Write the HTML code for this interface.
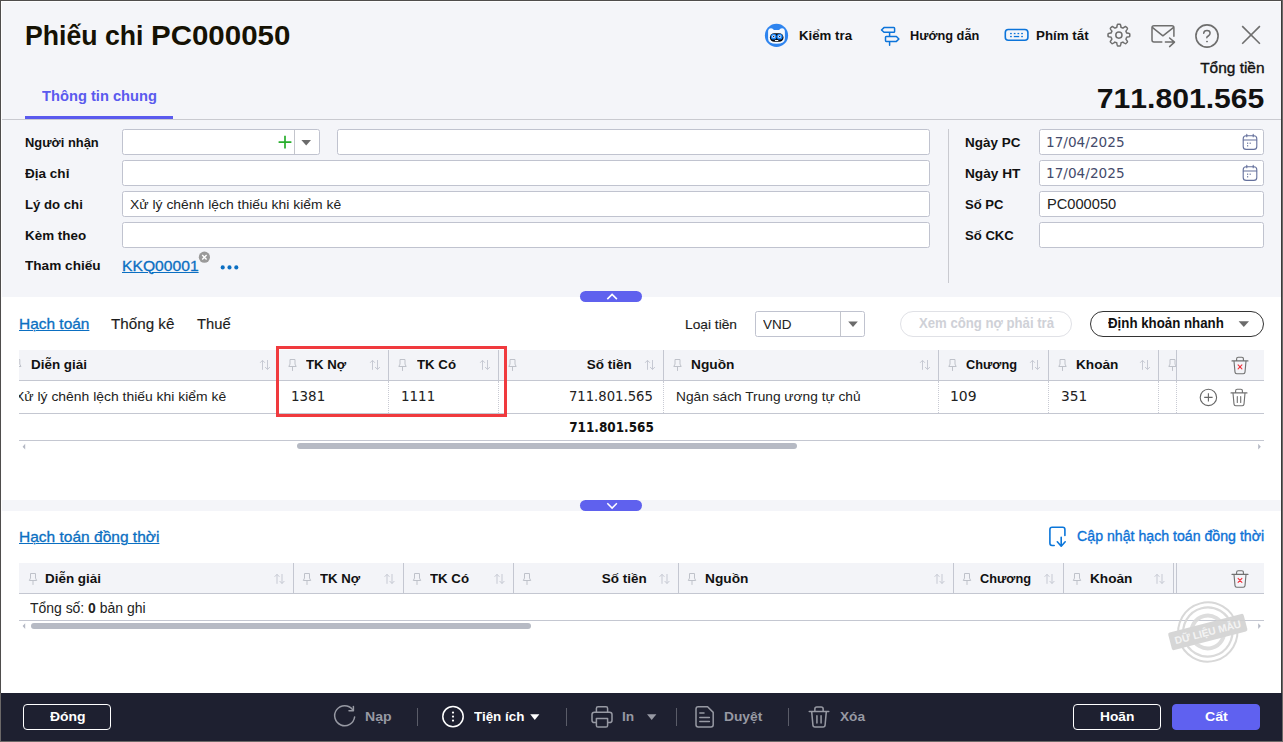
<!DOCTYPE html>
    <html lang="vi">
    <head>
    <meta charset="utf-8">
    <title>Phiếu chi PC000050</title>
    <style>
    *{box-sizing:border-box;margin:0;padding:0}
    html,body{width:1283px;height:742px;overflow:hidden}
    body{position:relative;background:#f4f5f9;font-family:"Liberation Sans",sans-serif;color:#1a1a1a;font-size:14px}
    .abs{position:absolute}
    .t{position:absolute;white-space:nowrap;line-height:1}
    .b{font-weight:bold}
.md{-webkit-text-stroke:.35px currentColor}
.md2{-webkit-text-stroke:.15px currentColor}
    #fr-t{left:0;top:0;width:1283px;height:1px;background:#4f4d4c}
    #fr-l{left:0;top:0;width:1px;height:742px;background:linear-gradient(#4f4d4c 0,#4f4d4c 693px,#6b6868 693px)}
    #fr-t2{left:1px;top:1px;width:1281px;height:1px;background:#fdfdfe}
    #fr-l2{left:1px;top:1px;width:1px;height:692px;background:#fdfdfe}
    #fr-r{left:1282px;top:0;width:1px;height:742px;background:#6b6868}
    #fr-r2{left:1281px;top:1px;width:1px;height:692px;background:#3c3b3b}
    #fr-b{left:0;top:741px;width:1283px;height:1px;background:#6b6868}
    .tb{color:#111;font-weight:bold}
    #tab-u{left:25px;top:116px;width:148px;height:3px;background:#5a5aee}
    #hline{left:2px;top:119px;width:1279px;height:1px;background:#c9cad0}
    .lb{font-weight:bold;color:#111}
    .in{position:absolute;height:26px;background:#fff;border:1px solid #c0c3cf;border-radius:2.5px}
    .v{color:#222}
    #vsep{left:948px;top:129px;width:1px;height:154px;background:#c9cad0}
    #sec1{left:2px;top:297px;width:1279px;height:203px;background:#fff}
    #sec2{left:2px;top:511px;width:1279px;height:182px;background:#fff}
    .handle{position:absolute;left:580px;width:62px;height:11px;background:#5f61ee;border-radius:5.5px}
    .lnk{color:#0b6fc2;text-decoration:underline;text-underline-offset:1px;text-decoration-thickness:1px;-webkit-text-stroke:.3px currentColor}
    .gh{position:absolute;left:19px;width:1245px;height:30px;background:#f3f4f8}
    .ht{font-weight:bold;color:#111}
    .cs{position:absolute;width:1px;background:#c4c7d1}
    .ds{position:absolute;width:0;border-left:1px dotted #c9cbd4}
    .hl{position:absolute;left:19px;width:1245px;height:1px;background:#c4c7d1}
    .cell{color:#222}
    .pill{position:absolute;top:311px;height:26px;border-radius:13px;background:#fff}
    #ft{left:1px;top:693px;width:1281px;height:48px;background:#1e2030}
    .fb{position:absolute;top:704px;height:26px;border:1px solid #fff;border-radius:4px}
    .fw{color:#fff;font-weight:bold}
    .fg{color:#9799a3;font-weight:bold}
    .fs{position:absolute;top:708px;width:1px;height:18px;background:#5a5c68}
    .sb{position:absolute;height:6px;border-radius:3px;background:#b6bac4}
    svg{position:absolute;left:0;top:0;overflow:visible;pointer-events:none}
    </style>
    </head>
    <body>
    <div class="t" id="t0" style="left:25px;top:22px;font-size:28.00px;transform:scaleX(0.9512);transform-origin:left center;font-weight:bold;color:#161204">Phiếu chi</div>
<div class="t" id="t1" style="left:151.2px;top:22px;font-size:28.00px;transform:scaleX(1.0533);transform-origin:left center;font-weight:bold;color:#161204">PC000050</div>
<div class="t tb" id="t2" style="left:799.4px;top:29px;font-size:13.60px;transform:scaleX(0.9742);transform-origin:left center;">Kiểm tra</div>
<div class="t tb" id="t3" style="left:909.9px;top:29px;font-size:13.60px;transform:scaleX(0.9379);transform-origin:left center;">Hướng dẫn</div>
<div class="t tb" id="t4" style="left:1036.1px;top:29px;font-size:13.60px;transform:scaleX(0.9809);transform-origin:left center;">Phím tắt</div>
<div class="t md" id="t5" style="right:18.59999999999991px;top:60px;font-size:15.00px;transform:scaleX(1.0296);transform-origin:right center;color:#111">Tổng tiền</div>
<div class="t b" id="t6" style="right:18.799999999999955px;top:85px;font-size:27.40px;transform:scaleX(1.1003);transform-origin:right center;color:#111;font-kerning:none">711.801.565</div>
<div class="t b" id="t7" style="left:42px;top:89px;font-size:14.80px;transform:scaleX(0.9923);transform-origin:left center;color:#5a5aee">Thông tin chung</div>
<div class="abs" id="tab-u"></div>
<div class="abs" id="hline"></div>
<div class="t lb" id="t8" style="left:25.2px;top:136px;font-size:13.20px;transform:scaleX(0.9782);transform-origin:left center;">Người nhận</div>
<div class="t lb" id="t9" style="left:25.2px;top:167px;font-size:13.20px;transform:scaleX(1.0266);transform-origin:left center;">Địa chỉ</div>
<div class="t lb" id="t10" style="left:25.2px;top:198px;font-size:13.20px;transform:scaleX(0.9984);transform-origin:left center;">Lý do chi</div>
<div class="t lb" id="t11" style="left:25.2px;top:229px;font-size:13.20px;transform:scaleX(1.0167);transform-origin:left center;">Kèm theo</div>
<div class="t lb" id="t12" style="left:25.2px;top:259px;font-size:13.20px;transform:scaleX(1.0316);transform-origin:left center;">Tham chiếu</div>
<div class="in" style="left:122px;top:129px;width:198px"></div>
<div class="abs" style="left:294px;top:130px;width:1px;height:24px;background:#c3c5cc"></div>
<div class="in" style="left:337px;top:129px;width:593px"></div>
<div class="in" style="left:122px;top:160px;width:808px"></div>
<div class="in" style="left:122px;top:191px;width:808px"></div>
<div class="in" style="left:122px;top:222px;width:808px"></div>
<div class="t v" id="t13" style="left:129.5px;top:198px;font-size:13.60px;transform:scaleX(1.0237);transform-origin:left center;">Xử lý chênh lệch thiếu khi kiểm kê</div>
<div class="t lnk" id="t14" style="left:121.8px;top:259px;font-size:14.40px;transform:scaleX(1.0877);transform-origin:left center;">KKQ00001</div>
<div class="abs" id="vsep"></div>
<div class="t lb" id="t15" style="left:965.2px;top:136px;font-size:13.20px;transform:scaleX(1.0215);transform-origin:left center;">Ngày PC</div>
<div class="in" style="left:1039px;top:129px;width:225px"></div>
<div class="t lb" id="t16" style="left:965.2px;top:167px;font-size:13.20px;transform:scaleX(1.0355);transform-origin:left center;">Ngày HT</div>
<div class="in" style="left:1039px;top:160px;width:225px"></div>
<div class="t lb" id="t17" style="left:965.2px;top:198px;font-size:13.20px;transform:scaleX(0.9886);transform-origin:left center;">Số PC</div>
<div class="in" style="left:1039px;top:191px;width:225px"></div>
<div class="t lb" id="t18" style="left:965.2px;top:229px;font-size:13.20px;transform:scaleX(0.9940);transform-origin:left center;">Số CKC</div>
<div class="in" style="left:1039px;top:222px;width:225px"></div>
<div class="t v" id="t19" style="left:1046.2px;top:136px;font-size:13.50px;font-family:'DejaVu Sans','Liberation Sans',sans-serif;transform:scaleX(1.0101);transform-origin:left center;color:#444b6b">17/04/2025</div>
<div class="t v" id="t20" style="left:1046.2px;top:167px;font-size:13.50px;font-family:'DejaVu Sans','Liberation Sans',sans-serif;transform:scaleX(1.0101);transform-origin:left center;color:#444b6b">17/04/2025</div>
<div class="t v" id="t21" style="left:1046.6px;top:198px;font-size:13.80px;transform:scaleX(1.0610);transform-origin:left center;">PC000050</div>
<div class="abs" id="sec1"></div>
<div class="abs" id="sec2"></div>
<div class="handle" style="top:291px"></div>
<div class="handle" style="top:500px"></div>
<div class="t lnk" id="t22" style="left:18.6px;top:317px;font-size:14.40px;transform:scaleX(1.0730);transform-origin:left center;">Hạch toán</div>
<div class="t md2" id="t23" style="left:111.2px;top:317px;font-size:14.40px;transform:scaleX(1.0564);transform-origin:left center;color:#1c1c1c">Thống kê</div>
<div class="t md2" id="t24" style="left:197.2px;top:317px;font-size:14.40px;transform:scaleX(1.0240);transform-origin:left center;color:#1c1c1c">Thuế</div>
<div class="t md2" id="t25" style="left:684.6px;top:318px;font-size:13.60px;transform:scaleX(1.0116);transform-origin:left center;color:#1c1c1c">Loại tiền</div>
<div class="in" style="left:755px;top:311px;width:110px"></div>
<div class="abs" style="left:840px;top:312px;width:1px;height:24px;background:#c3c5cc"></div>
<div class="t v" id="t26" style="left:762.6px;top:318px;font-size:13.60px;transform:scaleX(0.9929);transform-origin:left center;">VND</div>
<div class="pill" style="left:900px;width:172px;border:1px solid #e0e1e6"></div>
<div class="t b" id="t27" style="left:918.8px;top:317px;font-size:13.80px;transform:scaleX(0.9529);transform-origin:left center;color:#cfd1d7">Xem công nợ phải trả</div>
<div class="pill" style="left:1090px;width:174px;border:1px solid #333"></div>
<div class="t b" id="t28" style="left:1108px;top:317px;font-size:13.80px;transform:scaleX(0.9622);transform-origin:left center;color:#111">Định khoản nhanh</div>
<div class="gh" style="top:350px"></div>
<div class="hl" style="top:380px"></div>
<div class="hl" style="top:413px"></div>
<div class="hl" style="top:440px"></div>
<div class="cs" style="left:278px;top:350px;height:30px"></div>
<div class="ds" style="left:278px;top:381px;height:32px"></div>
<div class="cs" style="left:388px;top:350px;height:30px"></div>
<div class="ds" style="left:388px;top:381px;height:32px"></div>
<div class="cs" style="left:498px;top:350px;height:30px"></div>
<div class="ds" style="left:498px;top:381px;height:32px"></div>
<div class="cs" style="left:663px;top:350px;height:30px"></div>
<div class="ds" style="left:663px;top:381px;height:32px"></div>
<div class="cs" style="left:938px;top:350px;height:30px"></div>
<div class="ds" style="left:938px;top:381px;height:32px"></div>
<div class="cs" style="left:1048px;top:350px;height:30px"></div>
<div class="ds" style="left:1048px;top:381px;height:32px"></div>
<div class="cs" style="left:1158px;top:350px;height:30px"></div>
<div class="ds" style="left:1158px;top:381px;height:32px"></div>
<div class="cs" style="left:1176px;top:350px;height:30px"></div>
<div class="ds" style="left:1176px;top:381px;height:32px"></div>
<div class="t ht" id="t29" style="left:30.8px;top:358px;font-size:13.40px;transform:scaleX(1.0034);transform-origin:left center;">Diễn giải</div>
<div class="t ht" id="t30" style="left:306.3px;top:358px;font-size:13.40px;transform:scaleX(0.9861);transform-origin:left center;">TK Nợ</div>
<div class="t ht" id="t31" style="left:416.5px;top:358px;font-size:13.40px;transform:scaleX(0.9893);transform-origin:left center;">TK Có</div>
<div class="t ht" id="t32" style="right:651.2px;top:358px;font-size:13.40px;transform:scaleX(1.0036);transform-origin:right center;">Số tiền</div>
<div class="t ht" id="t33" style="left:690.6px;top:358px;font-size:13.40px;transform:scaleX(1.0238);transform-origin:left center;">Nguồn</div>
<div class="t ht" id="t34" style="left:965.8px;top:358px;font-size:13.40px;transform:scaleX(0.9544);transform-origin:left center;">Chương</div>
<div class="t ht" id="t35" style="left:1075.7px;top:358px;font-size:13.40px;transform:scaleX(1.0179);transform-origin:left center;">Khoản</div>
<div class="abs" style="left:19px;top:381px;width:250px;height:32px;overflow:hidden"><div class="t cell" id="t36" style="left:-3.6px;top:9px;font-size:13.60px;transform:scaleX(1.0237);transform-origin:left center;">Xử lý chênh lệch thiếu khi kiểm kê</div>
</div>
<div class="t cell" id="t37" style="left:290.8px;top:390px;font-size:13.50px;font-family:'DejaVu Sans','Liberation Sans',sans-serif;transform:scaleX(0.9954);transform-origin:left center;">1381</div>
<div class="t cell" id="t38" style="left:400.8px;top:390px;font-size:13.50px;font-family:'DejaVu Sans','Liberation Sans',sans-serif;transform:scaleX(0.9954);transform-origin:left center;">1111</div>
<div class="t cell" id="t39" style="right:630px;top:390px;font-size:13.50px;font-family:'DejaVu Sans','Liberation Sans',sans-serif;transform:scaleX(0.9780);transform-origin:right center;">711.801.565</div>
<div class="t cell" id="t40" style="left:675.8px;top:390px;font-size:13.60px;transform:scaleX(1.0099);transform-origin:left center;">Ngân sách Trung ương tự chủ</div>
<div class="t cell" id="t41" style="left:950.4px;top:390px;font-size:13.50px;font-family:'DejaVu Sans','Liberation Sans',sans-serif;transform:scaleX(1.0318);transform-origin:left center;">109</div>
<div class="t cell" id="t42" style="left:1060.6px;top:390px;font-size:13.50px;font-family:'DejaVu Sans','Liberation Sans',sans-serif;transform:scaleX(1.0162);transform-origin:left center;">351</div>
<div class="t b" id="t43" style="right:628.8px;top:421px;font-size:13.50px;font-family:'DejaVu Sans','Liberation Sans',sans-serif;transform:scaleX(0.8924);transform-origin:right center;color:#111">711.801.565</div>
<div class="sb" style="left:297px;top:443px;width:500px"></div>
<div class="abs" style="left:276px;top:346px;width:231px;height:71px;border:3px solid #f03a3e"></div>
<div class="t lnk" id="t44" style="left:18.6px;top:530px;font-size:14.40px;transform:scaleX(1.0779);transform-origin:left center;">Hạch toán đồng thời</div>
<div class="t md" id="t45" style="right:18.5px;top:529px;font-size:14.00px;transform:scaleX(1.0102);transform-origin:right center;color:#0d72d6">Cập nhật hạch toán đồng thời</div>
<div class="gh" style="top:563px"></div>
<div class="hl" style="top:593px"></div>
<div class="hl" style="top:620px"></div>
<div class="cs" style="left:293px;top:563px;height:30px"></div>
<div class="cs" style="left:403px;top:563px;height:30px"></div>
<div class="cs" style="left:513px;top:563px;height:30px"></div>
<div class="cs" style="left:678px;top:563px;height:30px"></div>
<div class="cs" style="left:953px;top:563px;height:30px"></div>
<div class="cs" style="left:1063px;top:563px;height:30px"></div>
<div class="cs" style="left:1173px;top:563px;height:30px"></div>
<div class="cs" style="left:1176px;top:563px;height:30px"></div>
<div class="t ht" id="t46" style="left:44.8px;top:572px;font-size:13.40px;transform:scaleX(1.0034);transform-origin:left center;">Diễn giải</div>
<div class="t ht" id="t47" style="left:320.4px;top:572px;font-size:13.40px;transform:scaleX(0.9861);transform-origin:left center;">TK Nợ</div>
<div class="t ht" id="t48" style="left:430.4px;top:572px;font-size:13.40px;transform:scaleX(0.9893);transform-origin:left center;">TK Có</div>
<div class="t ht" id="t49" style="right:636.6px;top:572px;font-size:13.40px;transform:scaleX(1.0036);transform-origin:right center;">Số tiền</div>
<div class="t ht" id="t50" style="left:704.8px;top:572px;font-size:13.40px;transform:scaleX(1.0238);transform-origin:left center;">Nguồn</div>
<div class="t ht" id="t51" style="left:980.2px;top:572px;font-size:13.40px;transform:scaleX(0.9544);transform-origin:left center;">Chương</div>
<div class="t ht" id="t52" style="left:1090px;top:572px;font-size:13.40px;transform:scaleX(1.0179);transform-origin:left center;">Khoản</div>
<div class="t" id="t53" style="left:29.8px;top:602px;font-size:13.80px;transform:scaleX(1.0103);transform-origin:left center;color:#222">Tổng số: <b>0</b> bản ghi</div>
<div class="sb" style="left:31px;top:623px;width:500px"></div>
<div class="abs" id="ft"></div>
<div class="fb" style="left:23px;width:88px"></div>
<div class="t fw" id="t54" style="left:49.6px;top:710px;font-size:13.50px;transform:scaleX(1.0319);transform-origin:left center;">Đóng</div>
<div class="t fg" id="t55" style="left:364.8px;top:710px;font-size:13.50px;transform:scaleX(1.0425);transform-origin:left center;">Nạp</div>
<div class="t fw" id="t56" style="left:473.6px;top:710px;font-size:13.50px;transform:scaleX(0.9928);transform-origin:left center;">Tiện ích</div>
<div class="t fg" id="t57" style="left:621.8px;top:710px;font-size:13.50px;transform:scaleX(1.0167);transform-origin:left center;">In</div>
<div class="t fg" id="t58" style="left:724px;top:710px;font-size:13.50px;transform:scaleX(1.0209);transform-origin:left center;">Duyệt</div>
<div class="t fg" id="t59" style="left:839.7px;top:710px;font-size:13.50px;transform:scaleX(1.0095);transform-origin:left center;">Xóa</div>
<div class="fs" style="left:417px"></div>
<div class="fs" style="left:566px"></div>
<div class="fs" style="left:675.5px"></div>
<div class="fs" style="left:787.5px"></div>
<div class="fb" style="left:1073px;width:88px"></div>
<div class="t fw" id="t60" style="left:1099.8px;top:710px;font-size:13.50px;transform:scaleX(1.0193);transform-origin:left center;">Hoãn</div>
<div class="fb" style="left:1172px;width:88px;background:#5f61f0;border-color:#5f61f0"></div>
<div class="t fw" id="t61" style="left:1204.8px;top:710px;font-size:13.50px;transform:scaleX(1.0475);transform-origin:left center;">Cất</div>
<svg width="1283" height="742" viewBox="0 0 1283 742">
<g transform="translate(776.5,35.4)">
    <circle r="11.6" fill="#2e84ef"/>
    <path d="M-8.4,-2.6 Q-8.8,-7.2 -5.4,-7.2 Q-3.6,-7.2 -2.6,-5.4 H2.6 Q3.6,-7.2 5.4,-7.2 Q8.8,-7.2 8.4,-2.6 V3 Q8.4,8.4 0,8.4 Q-8.4,8.4 -8.4,3 Z" fill="#f4f9ff"/>
    <rect x="-6.6" y="-2.2" width="13.6" height="8.6" rx="4.3" fill="#05070c"/>
    <circle cx="-2.8" cy="1.3" r="2.9" fill="#1b86f7"/><circle cx="3.2" cy="1.3" r="2.9" fill="#1b86f7"/>
    <circle cx="-2.9" cy="1.2" r="1.5" fill="#e8f2ff"/><circle cx="3.1" cy="1.2" r="1.5" fill="#e8f2ff"/>
    <circle cx="-2.9" cy="1.2" r=".75" fill="#1c1d45"/><circle cx="3.1" cy="1.2" r=".75" fill="#1c1d45"/>
    <rect x="-1.6" y="4.5" width="3.4" height="1.1" rx=".3" fill="#f4f9ff"/>
    </g>
    <g fill="none" stroke="#0c74da" stroke-width="1.5" stroke-linejoin="round" stroke-linecap="round">
    <path d="M884,27.6 H893.8 Q894.6,27.6 894.6,28.4 V31.5 Q894.6,32.3 893.8,32.3 H884 L881.5,29.95 Z"/>
    <path d="M886.3,36.5 H896.4 L898.9,38.95 L896.4,41.4 H886.3 Q885.5,41.4 885.5,40.6 V37.3 Q885.5,36.5 886.3,36.5 Z"/>
    <path d="M889.6,33 V35.8 M889.6,42.2 V45.2"/>
    </g>
    <rect x="1005.3" y="29.5" width="22.6" height="10.7" rx="3" fill="none" stroke="#0c74da" stroke-width="1.6"/>
    <g fill="#0c74da"><rect x="1010.1" y="32.9" width="1.7" height="1.3"/><rect x="1013.8" y="32.9" width="1.7" height="1.3"/><rect x="1017.5" y="32.9" width="1.7" height="1.3"/><rect x="1021.2" y="32.9" width="1.7" height="1.3"/>
    <rect x="1010.1" y="35.9" width="1.7" height="1.3"/><rect x="1013.8" y="35.9" width="5.4" height="1.3"/><rect x="1021.2" y="35.9" width="1.7" height="1.3"/></g>
    <path d="M1118.90,24.20 L1119.19,24.20 L1119.47,24.21 L1119.76,24.23 L1120.04,24.26 L1120.31,24.37 L1120.51,24.93 L1120.67,25.53 L1120.80,26.14 L1120.91,26.74 L1120.99,27.30 L1121.17,27.43 L1121.37,27.49 L1121.57,27.56 L1121.77,27.63 L1121.96,27.71 L1122.15,27.79 L1122.34,27.88 L1122.53,27.97 L1122.72,28.07 L1122.94,28.11 L1123.39,27.77 L1123.89,27.42 L1124.42,27.07 L1124.95,26.77 L1125.49,26.51 L1125.76,26.63 L1125.98,26.81 L1126.19,27.00 L1126.40,27.19 L1126.61,27.39 L1126.81,27.60 L1127.00,27.81 L1127.19,28.02 L1127.37,28.24 L1127.49,28.51 L1127.23,29.05 L1126.93,29.58 L1126.58,30.11 L1126.23,30.61 L1125.89,31.06 L1125.93,31.28 L1126.03,31.47 L1126.12,31.66 L1126.21,31.85 L1126.29,32.04 L1126.37,32.23 L1126.44,32.43 L1126.51,32.63 L1126.57,32.83 L1126.70,33.01 L1127.26,33.09 L1127.86,33.20 L1128.47,33.33 L1129.07,33.49 L1129.63,33.69 L1129.74,33.96 L1129.77,34.24 L1129.79,34.53 L1129.80,34.81 L1129.80,35.10 L1129.80,35.39 L1129.79,35.67 L1129.77,35.96 L1129.74,36.24 L1129.63,36.51 L1129.07,36.71 L1128.47,36.87 L1127.86,37.00 L1127.26,37.11 L1126.70,37.19 L1126.57,37.37 L1126.51,37.57 L1126.44,37.77 L1126.37,37.97 L1126.29,38.16 L1126.21,38.35 L1126.12,38.54 L1126.03,38.73 L1125.93,38.92 L1125.89,39.14 L1126.23,39.59 L1126.58,40.09 L1126.93,40.62 L1127.23,41.15 L1127.49,41.69 L1127.37,41.96 L1127.19,42.18 L1127.00,42.39 L1126.81,42.60 L1126.61,42.81 L1126.40,43.01 L1126.19,43.20 L1125.98,43.39 L1125.76,43.57 L1125.49,43.69 L1124.95,43.43 L1124.42,43.13 L1123.89,42.78 L1123.39,42.43 L1122.94,42.09 L1122.72,42.13 L1122.53,42.23 L1122.34,42.32 L1122.15,42.41 L1121.96,42.49 L1121.77,42.57 L1121.57,42.64 L1121.37,42.71 L1121.17,42.77 L1120.99,42.90 L1120.91,43.46 L1120.80,44.06 L1120.67,44.67 L1120.51,45.27 L1120.31,45.83 L1120.04,45.94 L1119.76,45.97 L1119.47,45.99 L1119.19,46.00 L1118.90,46.00 L1118.61,46.00 L1118.33,45.99 L1118.04,45.97 L1117.76,45.94 L1117.49,45.83 L1117.29,45.27 L1117.13,44.67 L1117.00,44.06 L1116.89,43.46 L1116.81,42.90 L1116.63,42.77 L1116.43,42.71 L1116.23,42.64 L1116.03,42.57 L1115.84,42.49 L1115.65,42.41 L1115.46,42.32 L1115.27,42.23 L1115.08,42.13 L1114.86,42.09 L1114.41,42.43 L1113.91,42.78 L1113.38,43.13 L1112.85,43.43 L1112.31,43.69 L1112.04,43.57 L1111.82,43.39 L1111.61,43.20 L1111.40,43.01 L1111.19,42.81 L1110.99,42.60 L1110.80,42.39 L1110.61,42.18 L1110.43,41.96 L1110.31,41.69 L1110.57,41.15 L1110.87,40.62 L1111.22,40.09 L1111.57,39.59 L1111.91,39.14 L1111.87,38.92 L1111.77,38.73 L1111.68,38.54 L1111.59,38.35 L1111.51,38.16 L1111.43,37.97 L1111.36,37.77 L1111.29,37.57 L1111.23,37.37 L1111.10,37.19 L1110.54,37.11 L1109.94,37.00 L1109.33,36.87 L1108.73,36.71 L1108.17,36.51 L1108.06,36.24 L1108.03,35.96 L1108.01,35.67 L1108.00,35.39 L1108.00,35.10 L1108.00,34.81 L1108.01,34.53 L1108.03,34.24 L1108.06,33.96 L1108.17,33.69 L1108.73,33.49 L1109.33,33.33 L1109.94,33.20 L1110.54,33.09 L1111.10,33.01 L1111.23,32.83 L1111.29,32.63 L1111.36,32.43 L1111.43,32.23 L1111.51,32.04 L1111.59,31.85 L1111.68,31.66 L1111.77,31.47 L1111.87,31.28 L1111.91,31.06 L1111.57,30.61 L1111.22,30.11 L1110.87,29.58 L1110.57,29.05 L1110.31,28.51 L1110.43,28.24 L1110.61,28.02 L1110.80,27.81 L1110.99,27.60 L1111.19,27.39 L1111.40,27.19 L1111.61,27.00 L1111.82,26.81 L1112.04,26.63 L1112.31,26.51 L1112.85,26.77 L1113.38,27.07 L1113.91,27.42 L1114.41,27.77 L1114.86,28.11 L1115.08,28.07 L1115.27,27.97 L1115.46,27.88 L1115.65,27.79 L1115.84,27.71 L1116.03,27.63 L1116.23,27.56 L1116.43,27.49 L1116.63,27.43 L1116.81,27.30 L1116.89,26.74 L1117.00,26.14 L1117.13,25.53 L1117.29,24.93 L1117.49,24.37 L1117.76,24.26 L1118.04,24.23 L1118.33,24.21 L1118.61,24.20 Z" fill="none" stroke="#6e6e6e" stroke-width="1.5" stroke-linejoin="round"/>
<circle cx="1118.9" cy="35.1" r="3.1" fill="none" stroke="#6e6e6e" stroke-width="1.5"/>
<g fill="none" stroke="#6e6e6e" stroke-width="1.5" stroke-linecap="round" stroke-linejoin="round">
    <path d="M1161.8,42.1 H1154 Q1152,42.1 1152,40.1 V27.8 Q1152,25.8 1154,25.8 H1171.9 Q1173.9,25.8 1173.9,27.8 V36.2"/>
    <path d="M1152.6,27.6 L1162.9,35.8 L1173.3,27.6"/>
    <path d="M1165.4,42.1 H1174.2 M1169.6,38 L1174.5,42.1 L1169.6,46.6"/>
    </g>
    <circle cx="1207" cy="36" r="11.1" fill="none" stroke="#6e6e6e" stroke-width="1.6"/>
<path d="M1203.7,33.3 Q1203.9,30.5 1207,30.5 Q1210.1,30.5 1210.1,33.1 Q1210.1,35 1208.3,36 Q1206.8,36.8 1206.8,37.7" fill="none" stroke="#6e6e6e" stroke-width="1.5" stroke-linecap="round"/>
<ellipse cx="1207" cy="41.6" rx="1" ry=".8" fill="#6e6e6e"/>
<path d="M1242.2,26.1 L1259.9,43.8 M1259.9,26.1 L1242.2,43.8" stroke="#6e6e6e" stroke-width="1.6" fill="none"/>
<path d="M285,135.8 V148.4 M278.6,142.1 H291.4" stroke="#27ae2c" stroke-width="1.7" fill="none"/>
<path d="M301.4,140 H311 L306.2,145.6 Z" fill="#6b6b6b"/>
<path d="M848.2,321.4 H857.8 L853,327 Z" fill="#6b6b6b"/>
<path d="M1238.6,321.2 H1249 L1243.8,327 Z" fill="#6b6b6b"/>
<circle cx="204.4" cy="257.2" r="5.6" fill="#9a9a9a"/><path d="M202.2,255 L206.6,259.4 M206.6,255 L202.2,259.4" stroke="#fff" stroke-width="1.4"/>
<g fill="#0b6fc2"><circle cx="222.7" cy="267.4" r="2.05"/><circle cx="229.5" cy="267.4" r="2.05"/><circle cx="236.3" cy="267.4" r="2.05"/></g>
<g fill="none" stroke="#64709c" stroke-width="1.1" stroke-linecap="round"><rect x="1243.2" y="135.8" width="13.6" height="13.6" rx="3"/><path d="M1243.4,140 H1256.6 M1246.8,134.4 V136.8 M1253.2,134.4 V136.8"/></g><g fill="#64709c"><rect x="1247" y="142.6" width="1.2" height="1.2"/><rect x="1249.6" y="142.6" width="1.2" height="1.2"/><rect x="1247" y="145.2" width="1.2" height="1.2"/></g>
<g fill="none" stroke="#64709c" stroke-width="1.1" stroke-linecap="round"><rect x="1243.2" y="166.8" width="13.6" height="13.6" rx="3"/><path d="M1243.4,171 H1256.6 M1246.8,165.4 V167.8 M1253.2,165.4 V167.8"/></g><g fill="#64709c"><rect x="1247" y="173.6" width="1.2" height="1.2"/><rect x="1249.6" y="173.6" width="1.2" height="1.2"/><rect x="1247" y="176.2" width="1.2" height="1.2"/></g>
<path d="M607.3,299.1 L612.1,294.4 L616.9,299.1" fill="none" stroke="#fff" stroke-width="1.6"/>
<path d="M607.3,503.3 L612.1,508.1 L616.9,503.3" fill="none" stroke="#fff" stroke-width="1.5"/>
<svg x="19" y="350" width="10" height="30" viewBox="19 350 10 30" style="position:static;overflow:hidden"><path d="M14.8,359.5 h5 v4.6 l1.2,2.4 h-7.4 l1.2,-2.4 z M17.3,366.5 v4.4" fill="none" stroke="#bfc2ca" stroke-width="1"/>
</svg>
<path d="M290.0,359.5 h5 v4.6 l1.2,2.4 h-7.4 l1.2,-2.4 z M292.5,366.5 v4.4" fill="none" stroke="#bfc2ca" stroke-width="1"/>
<path d="M400.0,359.5 h5 v4.6 l1.2,2.4 h-7.4 l1.2,-2.4 z M402.5,366.5 v4.4" fill="none" stroke="#bfc2ca" stroke-width="1"/>
<path d="M510.0,359.5 h5 v4.6 l1.2,2.4 h-7.4 l1.2,-2.4 z M512.5,366.5 v4.4" fill="none" stroke="#bfc2ca" stroke-width="1"/>
<path d="M675.0,359.5 h5 v4.6 l1.2,2.4 h-7.4 l1.2,-2.4 z M677.5,366.5 v4.4" fill="none" stroke="#bfc2ca" stroke-width="1"/>
<path d="M950.0,359.5 h5 v4.6 l1.2,2.4 h-7.4 l1.2,-2.4 z M952.5,366.5 v4.4" fill="none" stroke="#bfc2ca" stroke-width="1"/>
<path d="M1060.0,359.5 h5 v4.6 l1.2,2.4 h-7.4 l1.2,-2.4 z M1062.5,366.5 v4.4" fill="none" stroke="#bfc2ca" stroke-width="1"/>
<svg x="1160" y="350" width="16" height="30" viewBox="1160 350 16 30" style="position:static;overflow:hidden"><path d="M1170.0,359.5 h5 v4.6 l1.2,2.4 h-7.4 l1.2,-2.4 z M1172.5,366.5 v4.4" fill="none" stroke="#bfc2ca" stroke-width="1"/>
</svg>
<path d="M262.5,369.8 V360.3 M260.1,362.8 L262.5,360.3 L264.9,362.8 M267.5,360 V369.5 M265.1,367 L267.5,369.5 L269.9,367" fill="none" stroke="#c6c9d3" stroke-width="1"/>
<path d="M372.5,369.8 V360.3 M370.1,362.8 L372.5,360.3 L374.9,362.8 M377.5,360 V369.5 M375.1,367 L377.5,369.5 L379.9,367" fill="none" stroke="#c6c9d3" stroke-width="1"/>
<path d="M482.5,369.8 V360.3 M480.1,362.8 L482.5,360.3 L484.9,362.8 M487.5,360 V369.5 M485.1,367 L487.5,369.5 L489.9,367" fill="none" stroke="#c6c9d3" stroke-width="1"/>
<path d="M647.5,369.8 V360.3 M645.1,362.8 L647.5,360.3 L649.9,362.8 M652.5,360 V369.5 M650.1,367 L652.5,369.5 L654.9,367" fill="none" stroke="#c6c9d3" stroke-width="1"/>
<path d="M922.5,369.8 V360.3 M920.1,362.8 L922.5,360.3 L924.9,362.8 M927.5,360 V369.5 M925.1,367 L927.5,369.5 L929.9,367" fill="none" stroke="#c6c9d3" stroke-width="1"/>
<path d="M1032.5,369.8 V360.3 M1030.1,362.8 L1032.5,360.3 L1034.9,362.8 M1037.5,360 V369.5 M1035.1,367 L1037.5,369.5 L1039.9,367" fill="none" stroke="#c6c9d3" stroke-width="1"/>
<path d="M1142.5,369.8 V360.3 M1140.1,362.8 L1142.5,360.3 L1144.9,362.8 M1147.5,360 V369.5 M1145.1,367 L1147.5,369.5 L1149.9,367" fill="none" stroke="#c6c9d3" stroke-width="1"/>
<g transform="translate(1240,365.5) scale(1.0)" fill="none" stroke="#707070" stroke-width="1.1" stroke-linecap="round" stroke-linejoin="round"><path d="M-8,-4.6 H8 M-3.4,-4.8 V-6.6 Q-3.4,-8.2 -1.8,-8.2 H1.8 Q3.4,-8.2 3.4,-6.6 V-4.8 M-6,-4.4 L-5,6.6 Q-4.9,8.2 -3.3,8.2 H3.3 Q4.9,8.2 5,6.6 L6,-4.4"/><path d="M-1.9,-.6 L1.9,3.4 M1.9,-.6 L-1.9,3.4" stroke="#f0323c" stroke-width="1.1"/></g>
<circle cx="1208.4" cy="397.4" r="8.2" fill="none" stroke="#666" stroke-width="1.1"/><path d="M1208.4,393.2 V401.6 M1204.2,397.4 H1212.6" stroke="#666" stroke-width="1.1"/>
<g transform="translate(1239,397.5) scale(1.0)" fill="none" stroke="#707070" stroke-width="1.1" stroke-linecap="round" stroke-linejoin="round"><path d="M-8,-4.6 H8 M-3.4,-4.8 V-6.6 Q-3.4,-8.2 -1.8,-8.2 H1.8 Q3.4,-8.2 3.4,-6.6 V-4.8 M-6,-4.4 L-5,6.6 Q-4.9,8.2 -3.3,8.2 H3.3 Q4.9,8.2 5,6.6 L6,-4.4"/><path d="M-1.7,-1 V5 M1.7,-1 V5"/></g>
<path d="M25.2,443.8 V449.6 L22.6,446.7 Z M1258.2,443.8 V449.6 L1260.8,446.7 Z" fill="#b4b8c4"/>
<path d="M25.2,623.2 V629 L22.6,626.1 Z M1258.2,623.2 V629 L1260.8,626.1 Z" fill="#b4b8c4"/>
<path d="M30.5,573.5 h5 v4.6 l1.2,2.4 h-7.4 l1.2,-2.4 z M33,580.5 v4.4" fill="none" stroke="#bfc2ca" stroke-width="1"/>
<path d="M304.5,573.5 h5 v4.6 l1.2,2.4 h-7.4 l1.2,-2.4 z M307,580.5 v4.4" fill="none" stroke="#bfc2ca" stroke-width="1"/>
<path d="M414.5,573.5 h5 v4.6 l1.2,2.4 h-7.4 l1.2,-2.4 z M417,580.5 v4.4" fill="none" stroke="#bfc2ca" stroke-width="1"/>
<path d="M524.5,573.5 h5 v4.6 l1.2,2.4 h-7.4 l1.2,-2.4 z M527,580.5 v4.4" fill="none" stroke="#bfc2ca" stroke-width="1"/>
<path d="M689.5,573.5 h5 v4.6 l1.2,2.4 h-7.4 l1.2,-2.4 z M692,580.5 v4.4" fill="none" stroke="#bfc2ca" stroke-width="1"/>
<path d="M964.5,573.5 h5 v4.6 l1.2,2.4 h-7.4 l1.2,-2.4 z M967,580.5 v4.4" fill="none" stroke="#bfc2ca" stroke-width="1"/>
<path d="M1074.5,573.5 h5 v4.6 l1.2,2.4 h-7.4 l1.2,-2.4 z M1077,580.5 v4.4" fill="none" stroke="#bfc2ca" stroke-width="1"/>
<path d="M277,583.8 V574.3 M274.6,576.8 L277,574.3 L279.4,576.8 M282,574 V583.5 M279.6,581 L282,583.5 L284.4,581" fill="none" stroke="#c6c9d3" stroke-width="1"/>
<path d="M387,583.8 V574.3 M384.6,576.8 L387,574.3 L389.4,576.8 M392,574 V583.5 M389.6,581 L392,583.5 L394.4,581" fill="none" stroke="#c6c9d3" stroke-width="1"/>
<path d="M497,583.8 V574.3 M494.6,576.8 L497,574.3 L499.4,576.8 M502,574 V583.5 M499.6,581 L502,583.5 L504.4,581" fill="none" stroke="#c6c9d3" stroke-width="1"/>
<path d="M662,583.8 V574.3 M659.6,576.8 L662,574.3 L664.4,576.8 M667,574 V583.5 M664.6,581 L667,583.5 L669.4,581" fill="none" stroke="#c6c9d3" stroke-width="1"/>
<path d="M937,583.8 V574.3 M934.6,576.8 L937,574.3 L939.4,576.8 M942,574 V583.5 M939.6,581 L942,583.5 L944.4,581" fill="none" stroke="#c6c9d3" stroke-width="1"/>
<path d="M1047,583.8 V574.3 M1044.6,576.8 L1047,574.3 L1049.4,576.8 M1052,574 V583.5 M1049.6,581 L1052,583.5 L1054.4,581" fill="none" stroke="#c6c9d3" stroke-width="1"/>
<path d="M1157,583.8 V574.3 M1154.6,576.8 L1157,574.3 L1159.4,576.8 M1162,574 V583.5 M1159.6,581 L1162,583.5 L1164.4,581" fill="none" stroke="#c6c9d3" stroke-width="1"/>
<g transform="translate(1240,579) scale(1.0)" fill="none" stroke="#707070" stroke-width="1.1" stroke-linecap="round" stroke-linejoin="round"><path d="M-8,-4.6 H8 M-3.4,-4.8 V-6.6 Q-3.4,-8.2 -1.8,-8.2 H1.8 Q3.4,-8.2 3.4,-6.6 V-4.8 M-6,-4.4 L-5,6.6 Q-4.9,8.2 -3.3,8.2 H3.3 Q4.9,8.2 5,6.6 L6,-4.4"/><path d="M-1.9,-.6 L1.9,3.4 M1.9,-.6 L-1.9,3.4" stroke="#f0323c" stroke-width="1.1"/></g>
<g fill="none" stroke="#0b76da" stroke-width="1.6" stroke-linecap="round" stroke-linejoin="round">
    <path d="M1054.2,545.5 H1052.1 Q1049.9,545.5 1049.9,543.3 V529.4 Q1049.9,527.2 1052.1,527.2 H1062.7 Q1064.9,527.2 1064.9,529.4 V535.4"/>
    <path d="M1061.2,537.2 V546 M1057.3,541.8 L1061.2,546.2 L1065.2,541.8"/>
    </g>
    <g transform="translate(1207.8,632) rotate(-14.6)" opacity=".9">
    <circle r="29.6" fill="none" stroke="#d4d4d4" stroke-width="2"/>
    <circle r="24.6" fill="none" stroke="#d6d6d6" stroke-width="2.2"/>
    <circle r="16.4" fill="none" stroke="#dadada" stroke-width="4"/>
    <rect x="-39" y="-9" width="78" height="18" rx="2" fill="#d2d2d2"/>
    <text x="0" y="3.8" text-anchor="middle" font-family="Liberation Sans, sans-serif" font-weight="bold" font-size="10.4" fill="#f3f3f3" textLength="68" lengthAdjust="spacingAndGlyphs">DỮ LIỆU MẪU</text>
    </g>
    <path d="M352.6,709.6 A10,10 0 1 0 354.6,717" fill="none" stroke="#9799a3" stroke-width="1.5" stroke-linecap="round"/><path d="M353.4,706.4 V710.8 H349" fill="none" stroke="#9799a3" stroke-width="1.5" stroke-linecap="round" stroke-linejoin="round"/>
<circle cx="453" cy="716.6" r="10.2" fill="none" stroke="#fff" stroke-width="1.5"/><g fill="#fff"><circle cx="453" cy="712.6" r="1.1"/><circle cx="453" cy="716.6" r="1.1"/><circle cx="453" cy="720.6" r="1.1"/></g>
<path d="M530.2,714.2 H539.4 L534.8,720 Z" fill="#fff"/>
<path d="M647,714.2 H656.4 L651.7,720 Z" fill="#9799a3"/>
<g fill="none" stroke="#9799a3" stroke-width="1.5" stroke-linejoin="round">
    <path d="M596.4,712 V708.4 Q596.4,706.8 598,706.8 H606 Q607.6,706.8 607.6,708.4 V712"/>
    <path d="M596.4,722.6 H594.4 Q592,722.6 592,720.2 V714.6 Q592,712.2 594.4,712.2 H609.6 Q612,712.2 612,714.6 V720.2 Q612,722.6 609.6,722.6 H607.6"/>
    <path d="M596.4,718.6 H607.6 V725.4 Q607.6,727 606,727 H598 Q596.4,727 596.4,725.4 Z"/>
    </g>
    <g fill="none" stroke="#9799a3" stroke-width="1.5" stroke-linejoin="round" stroke-linecap="round">
    <path d="M698.2,706.8 H707.6 L713.2,712.4 V724.8 Q713.2,727 711,727 H698.2 Q696,727 696,724.8 V709 Q696,706.8 698.2,706.8 Z"/>
    <path d="M699.8,713 H704 M699.8,717.4 H709.4 M699.8,721.6 H709.4"/>
    </g>
    <g transform="translate(819,717) scale(1.22)" fill="none" stroke="#9799a3" stroke-width="1.25" stroke-linecap="round" stroke-linejoin="round"><path d="M-8,-4.6 H8 M-3.4,-4.8 V-6.6 Q-3.4,-8.2 -1.8,-8.2 H1.8 Q3.4,-8.2 3.4,-6.6 V-4.8 M-6,-4.4 L-5,6.6 Q-4.9,8.2 -3.3,8.2 H3.3 Q4.9,8.2 5,6.6 L6,-4.4"/><path d="M-1.7,-1 V5 M1.7,-1 V5"/></g>
</svg>
<div class="abs" id="fr-t2"></div><div class="abs" id="fr-l2"></div>
    <div class="abs" id="fr-r2"></div>
    <div class="abs" id="fr-t"></div><div class="abs" id="fr-l"></div>
    <div class="abs" id="fr-r"></div><div class="abs" id="fr-b"></div>
    </body>
    </html>
